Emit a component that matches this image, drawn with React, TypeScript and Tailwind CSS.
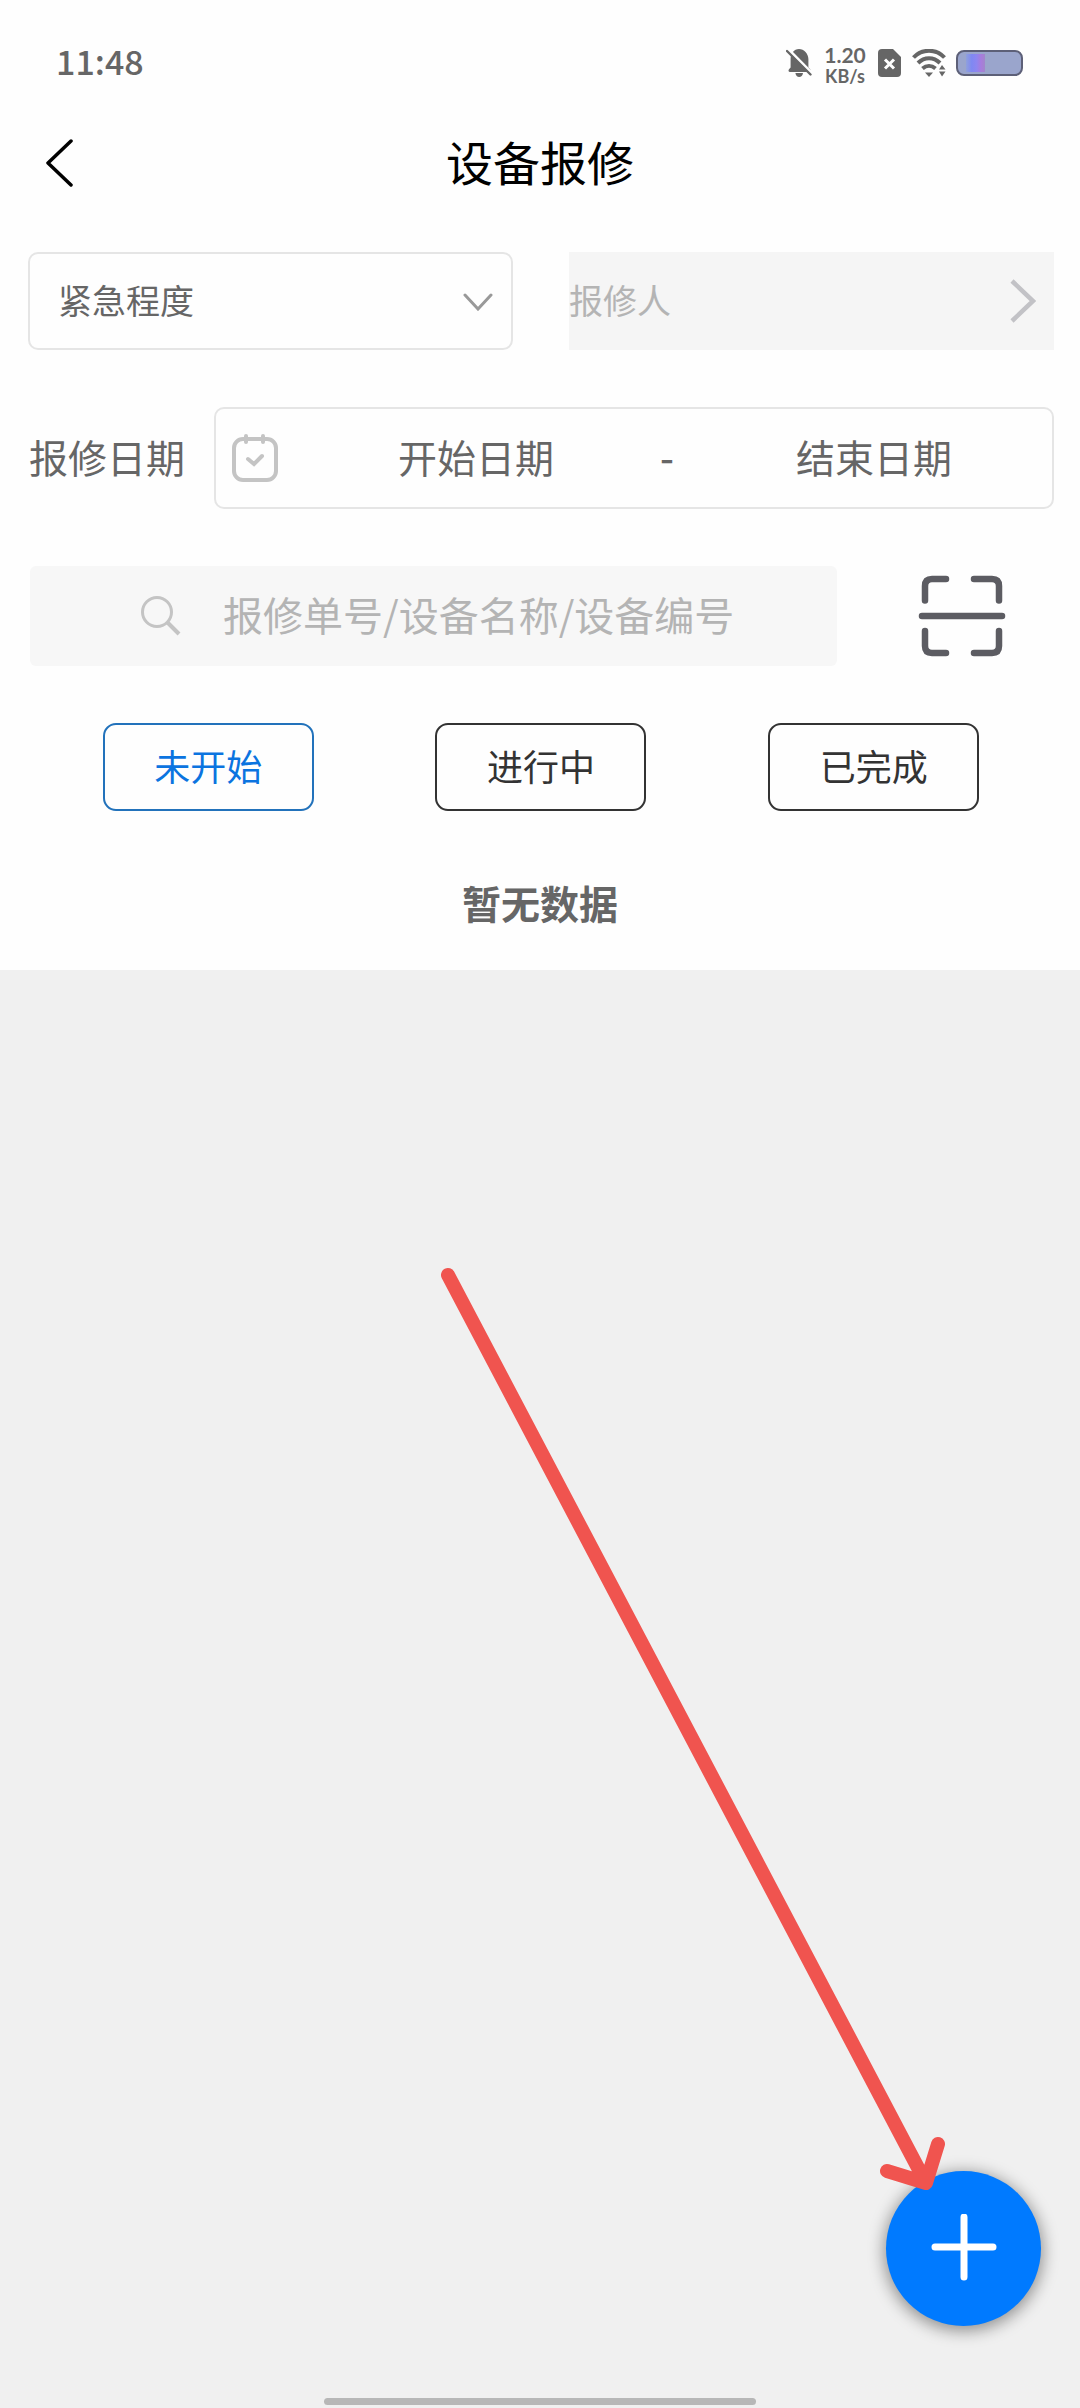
import { useState } from 'react';

type tStatus = {
    id: number;
    name: string;
}
type tFilter = {
    level: string;
    reporter: string;
    start: string;
    end: string;
    keyword: string;
}
const listStatus: tStatus[] = [
    { id: 1, name: '未开始' },
    { id: 2, name: '进行中' },
    { id: 3, name: '已完成' },
]
const initialFilter: tFilter = {
    level: '',
    reporter: '',
    start: '',
    end: '',
    keyword: ''
}

const StatusBar = () => {
    return <div className="flex h-[126px] items-center justify-between pl-14 pr-[57px] text-[#666]">
        <span className="pb-1 text-[34px] leading-[36px] font-medium">11:48</span>
        <div className="flex items-center">
            {/* muted bell */}
            <svg width="26" height="30" viewBox="0 0 26 30" fill="currentColor">
                <path d="M4 24C2.4 24 2 22.2 3.2 21L4.6 19.4V11C4.6 5.6 8 1 13 1S22.400 5.600 22.400 11V19.400L24 21C25 22.200 24.600 24 23 24Z" />
                <path d="M9.400 25H17C16.600 27.800 15.200 29 13.200 29S9.800 27.800 9.400 25Z" />
                <path d="M2.500 1.500L26 25.500" stroke="#fff" strokeWidth="3" />
                <path d="M1 3L24.500 26.500" stroke="currentColor" strokeWidth="2.400" strokeLinecap="round" />
            </svg>
            <div className="ml-3 flex w-[42px] flex-col items-center pt-1 font-['Lato',sans-serif] font-bold">
                <div className="text-[21px] leading-[22px]">1.20</div>
                <div className="text-[18px] leading-[20px]">KB/s</div>
            </div>
            {/* no sim */}
            <svg className="ml-3" width="23" height="28" viewBox="0 0 23 28">
                <path d="M4 0H15L23 8V24Q23 28 19 28H4Q0 28 0 24V4Q0 0 4 0Z" fill="currentColor" />
                <path d="M7 10.500L16 19.500M16 10.500L7 19.500" stroke="#fff" strokeWidth="3" />
            </svg>
            <svg className="ml-[11px]" width="34" height="28" viewBox="0 0 34 28" fill="none" stroke="currentColor" strokeWidth="4">
                <path d="M1.500 8.500C10 -0.500 24 -0.500 32.500 8.500" />
                <path d="M6 14C12.500 7.500 21.500 7.500 28 14" />
                <path d="M10.500 19.500C14.500 16 19.500 16 23.500 19.500" />
                <path d="M13 23.500H21L17 28Z" fill="currentColor" stroke="none" />
                <path d="M27 20.500L30 16L33.500 20.500ZM27 22.500H33.500L30 27.500Z" fill="currentColor" stroke="none" />
            </svg>
            {/* battery */}
            <svg className="ml-[10px]" width="67" height="26" viewBox="0 0 67 26">
                <defs>
                    <linearGradient id="level" x1="0" y1="0" x2="1" y2="0">
                        <stop offset="0" stopColor="#8fa0dc" />
                        <stop offset="0.3" stopColor="#7f88f2" />
                        <stop offset="0.55" stopColor="#8d86f0" />
                        <stop offset="0.8" stopColor="#a87cdc" />
                        <stop offset="1" stopColor="#a286cc" />
                    </linearGradient>
                </defs>
                <rect x="1" y="1" width="65" height="24" rx="7" fill="#9aa5cc" stroke="#5d6078" strokeWidth="2" />
                <rect x="10" y="4" width="19" height="18" fill="url(#level)" />
            </svg>
        </div>
    </div>
}

const RepairPage = () => {
    const [status, setStatus] = useState<number>(1);
    const [filter, setFilter] = useState<tFilter>(initialFilter);

    const onChangeFilter = (e: React.ChangeEvent<HTMLInputElement | HTMLSelectElement>) => {
        const name = e.target.name as keyof tFilter;
        const val = e.target.value;
        setFilter(prev => ({ ...prev, [name]: val }))
    }

    return <div className="relative flex min-h-screen flex-col bg-[#f0f0f0] font-['Noto_Sans_CJK_SC',sans-serif]">
        <div className="bg-[#fefefe] pb-[42px]">
            <StatusBar />
            <header className="grid h-[74px] grid-cols-[1fr_auto_1fr] items-center">
                <button type="button" aria-label="返回" className="justify-self-start pl-[46px]">
                    <svg width="28" height="48" viewBox="0 0 28 48" fill="none" stroke="#000" strokeWidth="3.500" strokeLinecap="round" strokeLinejoin="round">
                        <path d="M25 2L2 24L25 46" />
                    </svg>
                </button>
                <h1 className="pb-1 text-[47px] leading-[64px] text-black">设备报修</h1>
            </header>

            <div className="mt-[52px] grid grid-cols-2 gap-14 pl-7 pr-[26px]">
                <div className="relative">
                    <select name="level" aria-label="紧急程度" value={filter.level} onChange={onChangeFilter} className="h-[98px] w-full appearance-none rounded-[10px] border-2 border-[#e5e5e5] pb-1 pl-[28px] text-[34px] text-[#666]">
                        <option value="">紧急程度</option>
                        <option value="1">一般</option>
                        <option value="2">紧急</option>
                    </select>
                    <svg className="pointer-events-none absolute right-5 top-[41px]" width="30" height="18" viewBox="0 0 30 18" fill="none" stroke="#999" strokeWidth="3" strokeLinecap="round">
                        <path d="M2 2L15 16L28 2" />
                    </svg>
                </div>
                <div className="flex h-[98px] items-center bg-[#f5f5f5] pr-[18px]">
                    <input name="reporter" aria-label="报修人" placeholder="报修人" value={filter.reporter} onChange={onChangeFilter} className="min-w-0 flex-1 pb-1 text-[34px] text-[#666] outline-none placeholder:text-[#b4b4b4]" />
                    <svg width="26" height="44" viewBox="0 0 26 44" fill="none" stroke="#c2c2c6" strokeWidth="4.500">
                        <path d="M2 2L23 22L2 42" />
                    </svg>
                </div>
            </div>

            <div className="mt-[57px] flex items-center pl-[29px] pr-[26px] text-[39px] text-[#666]">
                <label htmlFor="start" className="shrink-0 pb-1 whitespace-nowrap">报修日期</label>
                <div className="ml-[29px] flex h-[102px] min-w-0 flex-1 items-center rounded-[10px] border-2 border-[#e5e5e5] pl-4">
                    <svg className="shrink-0" width="46" height="48" viewBox="0 0 46 48" fill="none" stroke="#c4c4c4" strokeLinecap="round">
                        <rect x="2" y="5" width="42" height="41" rx="9" strokeWidth="4" />
                        <path d="M14 2V8M31 2V8" strokeWidth="4" />
                        <path d="M16 25L22 30L30 22" strokeWidth="4" />
                    </svg>
                    <input id="start" name="start" placeholder="开始日期" value={filter.start} onChange={onChangeFilter} className="ml-5 min-w-0 flex-1 pb-1 text-center outline-none placeholder:text-[#666]" />
                    <span className="w-[42px] shrink-0 pb-1 pl-1.5 font-medium">-</span>
                    <input name="end" aria-label="结束日期" placeholder="结束日期" value={filter.end} onChange={onChangeFilter} className="min-w-0 flex-1 pb-1 text-center outline-none placeholder:text-[#666]" />
                </div>
            </div>

            <div className="mt-[57px] flex items-center pl-[30px] pr-[74px]">
                <div className="flex h-[100px] min-w-0 flex-1 items-center rounded-md bg-[#f7f7f7] pl-[111px]">
                    <svg className="shrink-0" width="40" height="40" viewBox="0 0 40 40" fill="none" stroke="#c4c4c4">
                        <circle cx="16" cy="16" r="14.500" strokeWidth="3" />
                        <path d="M26.500 26.500L38 38" strokeWidth="4" />
                    </svg>
                    <input name="keyword" aria-label="报修单号/设备名称/设备编号" placeholder="报修单号/设备名称/设备编号" value={filter.keyword} onChange={onChangeFilter} className="ml-[42px] min-w-0 flex-1 pb-1 text-[40px] text-[#666] outline-none placeholder:text-[#b4b4b4]" />
                </div>
                <button type="button" aria-label="扫码" className="ml-[81px]">
                    <svg width="88" height="82" viewBox="0 0 88 82" fill="none" stroke="#5c5c62" strokeWidth="6.500" strokeLinecap="round">
                        <path d="M7 25.500V11Q7 4 14 4H28" />
                        <path d="M56 4H74Q81 4 81 11V25.500" />
                        <path d="M7 56V71Q7 78 14 78H28" />
                        <path d="M56 78H74Q81 78 81 71V56" />
                        <path d="M4 41H84" />
                    </svg>
                </button>
            </div>

            <div className="mt-[57px] grid grid-cols-3 pl-[42px] pr-10">
                {listStatus.map((v) => (
                    <button
                    key={v.id}
                    type="button"
                    aria-pressed={status === v.id}
                    onClick={() => setStatus(v.id)}
                    className={`h-[88px] w-[211px] justify-self-center rounded-[13px] border-2 pb-1 text-[36px] ${status === v.id ? 'border-[#2272bb] text-[#0b74e0]' : 'border-[#333] text-[#333]'}`}
                    >{v.name}</button>
                ))}
            </div>

            <p className="mt-[66px] text-center text-[39px] leading-[51px] font-bold text-[#666]">暂无数据</p>
        </div>

        <div className="mx-auto mb-[3px] mt-auto h-[7px] w-2/5 rounded-full bg-[#b7b7b7]"></div>

        <button type="button" aria-label="新增" className="absolute bottom-[82px] right-[39px] flex h-[155px] w-[155px] items-center justify-center rounded-full bg-[#007aff] shadow-[0_3px_16px_2px_rgba(0,0,0,0.4)]">
            <svg width="70" height="70" viewBox="0 0 70 70" stroke="#fff" strokeWidth="7" strokeLinecap="round">
                <path d="M35 3V63M6 33H64" />
            </svg>
        </button>
        <svg className="pointer-events-none absolute bottom-[214px] right-[132px]" width="510" height="930" viewBox="0 0 510 930" fill="none" stroke="#f0544f" strokeWidth="14" strokeLinecap="round" strokeLinejoin="round">
            <path d="M10 11L488 919M449 907L488 919L500 880" />
        </svg>
    </div>
}

export default RepairPage;
